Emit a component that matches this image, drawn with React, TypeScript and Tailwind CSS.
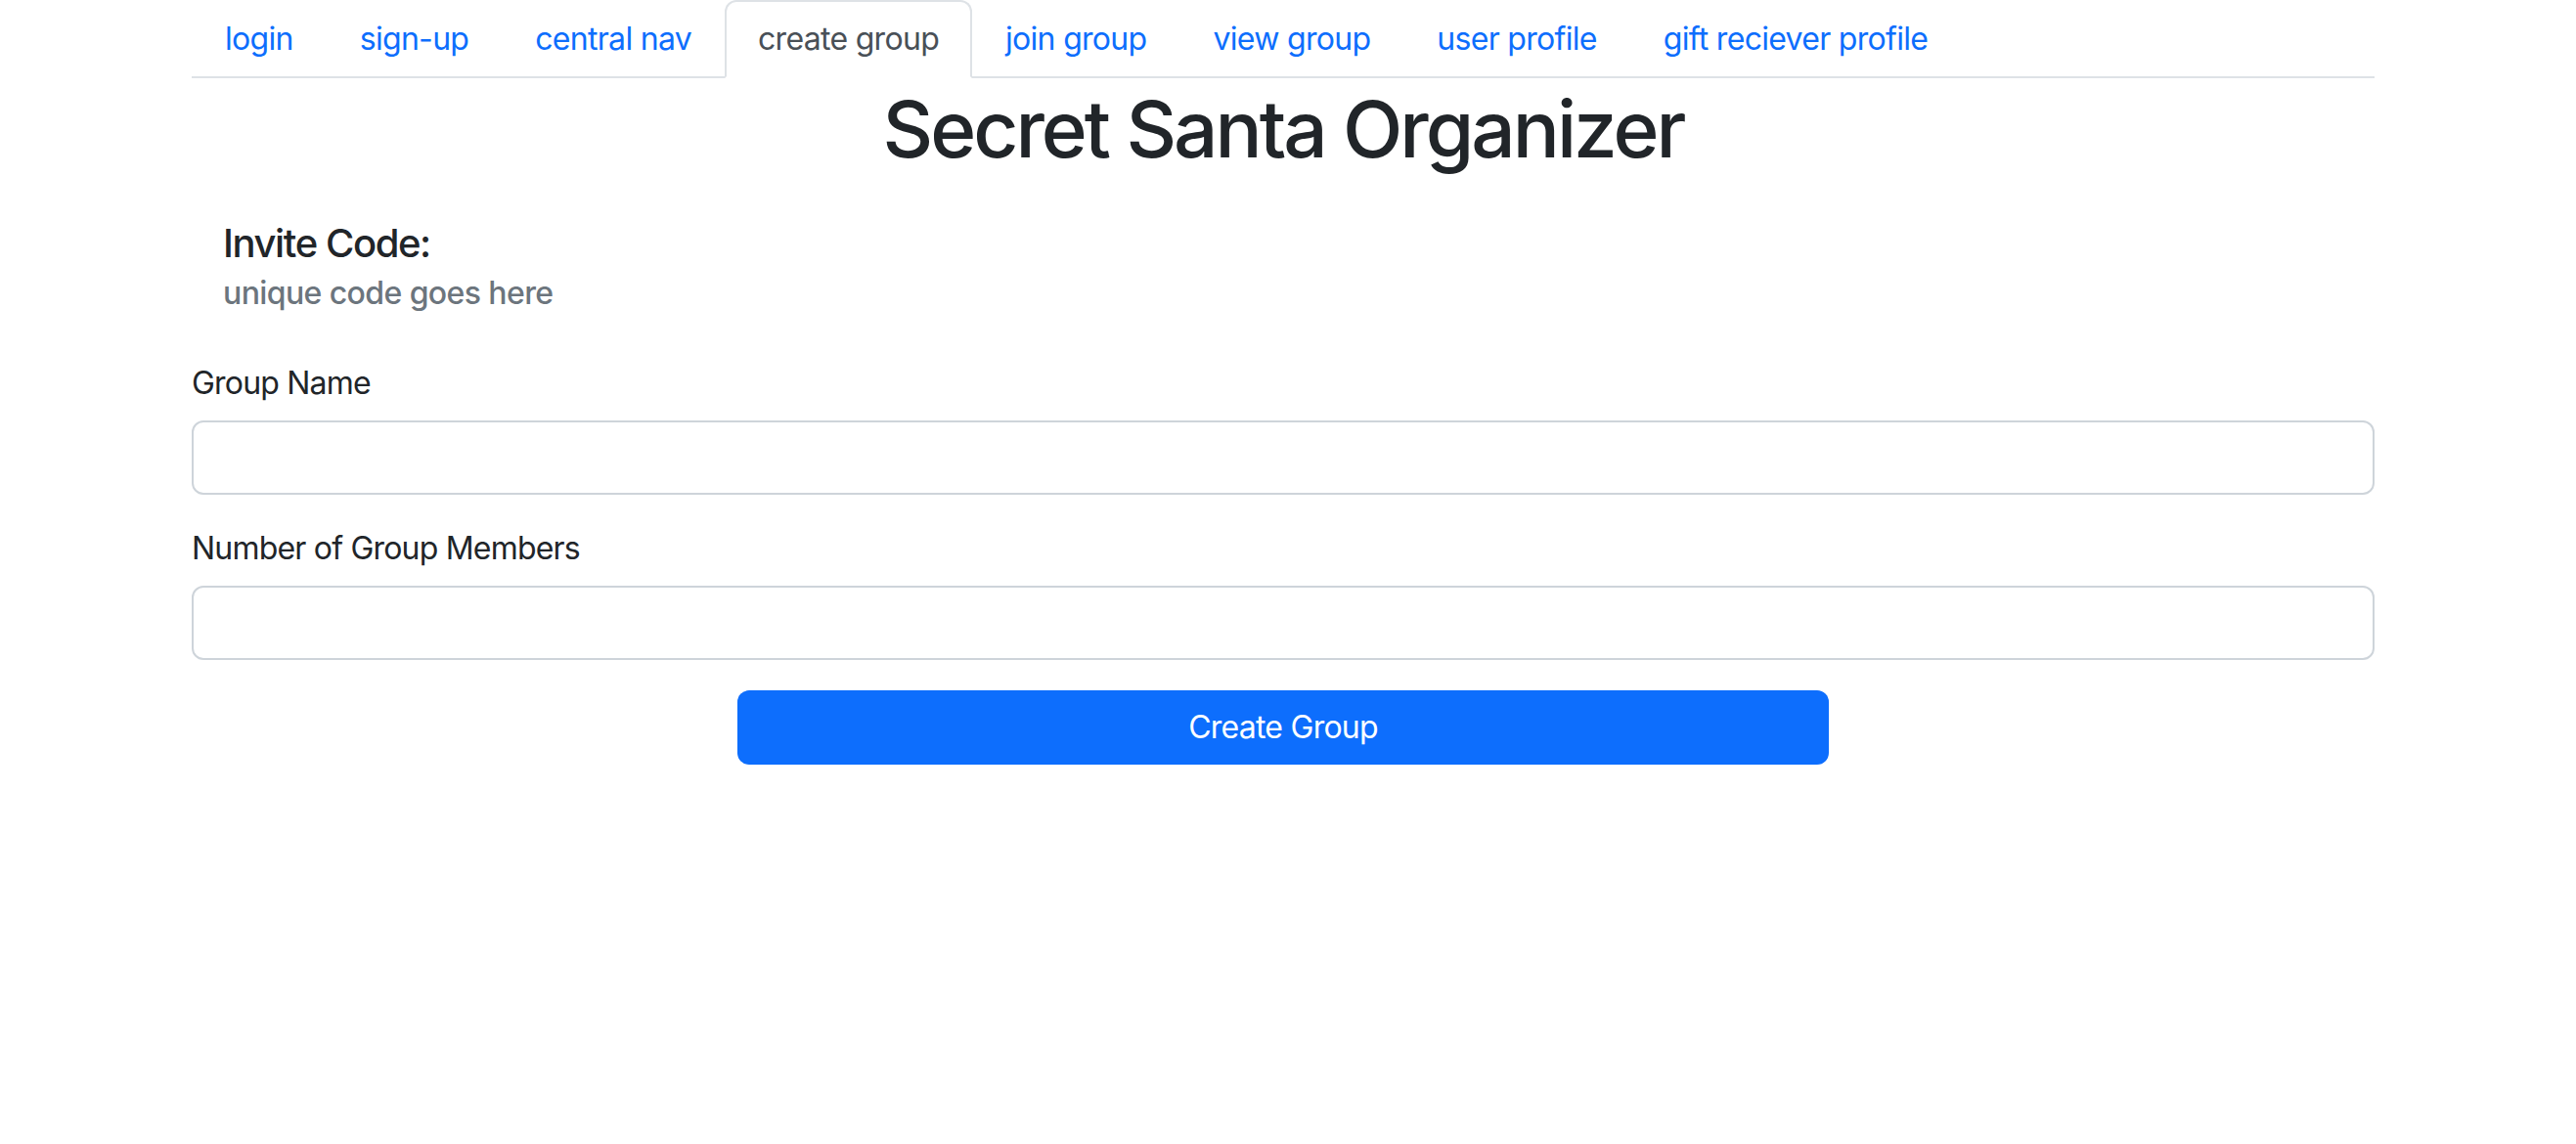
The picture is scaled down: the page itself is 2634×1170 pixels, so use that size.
import React from "react";

const tabs = [
  "login",
  "sign-up",
  "central nav",
  "create group",
  "join group",
  "view group",
  "user profile",
  "gift reciever profile",
];

function NavTabs({ active }: { active: string }) {
  return (
    <ul className="flex border-b-2 border-[#dee2e6]">
      {tabs.map((t) => (
        <li key={t} className="-mb-[2px]">
          <a
            href="#"
            className={
              t === active
                ? "block rounded-t-[12px] border-2 border-[#dee2e6] border-b-white bg-white px-8 py-[14px] text-[32px] leading-[48px] tracking-[-0.7px] text-[#495057]"
                : "block border-2 border-transparent px-8 py-[14px] text-[32px] leading-[48px] tracking-[-0.7px] text-[#0d6efd]"
            }
          >
            {t}
          </a>
        </li>
      ))}
    </ul>
  );
}

function Field({ label }: { label: string }) {
  return (
    <div className="mb-[31px]">
      <label className="mb-[14px] block text-[32px] leading-[48px] tracking-[-0.8px]">{label}</label>
      <input
        type="text"
        className="block h-[76px] w-full rounded-[12px] border-2 border-[#ced4da] bg-white px-6 text-[32px] outline-none"
      />
    </div>
  );
}

export default function App() {
  return (
    <div className="min-h-screen bg-white font-['Inter',sans-serif] text-[#212529]">
      <div className="ml-[196px] w-[2232px]">
        <NavTabs active="create group" />

        <h1 className="mt-[4px] text-center text-[80px] font-medium leading-[96px] tracking-[-3px]">
          Secret Santa Organizer
        </h1>

        <div className="px-8 pt-[45px] pb-[49px]">
          <h5 className="text-[40px] font-medium leading-[48px] tracking-[-1.4px]">Invite Code:</h5>
          <h6 className="mt-2 text-[32px] font-medium leading-[38px] tracking-[-0.6px] text-[#6c757d]">
            unique code goes here
          </h6>
        </div>

        <form onSubmit={(e) => e.preventDefault()}>
          <Field label="Group Name" />
          <Field label="Number of Group Members" />
          <div className="flex justify-center">
            <button
              type="submit"
              className="h-[76px] w-[1116px] rounded-[12px] bg-[#0d6efd] text-[32px] tracking-[-0.75px] text-white"
            >
              Create Group
            </button>
          </div>
        </form>
      </div>
    </div>
  );
}
